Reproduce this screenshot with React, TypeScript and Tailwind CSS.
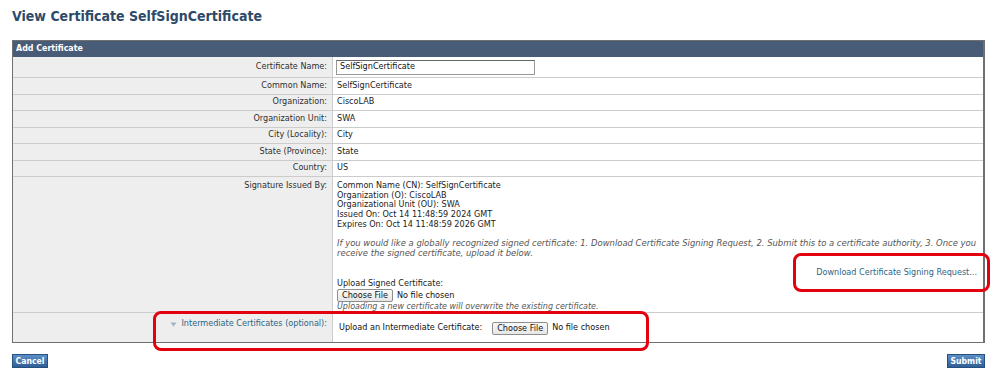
import React from "react";

const rows: [string, string][] = [
  ["Common Name:", "SelfSignCertificate"],
  ["Organization:", "CiscoLAB"],
  ["Organization Unit:", "SWA"],
  ["City (Locality):", "City"],
  ["State (Province):", "State"],
  ["Country:", "US"],
];

function FileBtn() {
  return (
    <span className="inline-flex items-center">
      <span className="inline-flex items-center h-[13px] px-[4px] border border-[#8e8e8e] rounded-[2px] bg-gradient-to-b from-[#fafafa] to-[#e6e6e6] text-[#111] leading-none">
        Choose File
      </span>
      <span className="ml-[4px] text-[#111]">No file chosen</span>
    </span>
  );
}

export default function App() {
  return (
    <div className="relative w-[999px] h-[386px] bg-white overflow-hidden font-['DejaVu_Sans_Condensed','DejaVu_Sans',sans-serif] text-[9px] leading-[9.6px] text-[#2e2e2e]">
      <div className="px-[12px] pt-[8px]">
        <h1 className="text-[14px] leading-[17px] font-bold text-[#2d4a69]">
          View Certificate SelfSignCertificate
        </h1>
        <div className="mt-[15px] w-[973px] border border-[#707070] border-r-2">
          <div className="h-[16px] bg-[#485c78] text-white font-bold flex items-center px-[3px] text-[8.8px]">
            Add Certificate
          </div>
          <div className="grid grid-cols-[320px_1fr]">
            <div className="h-[21px] bg-[#eeeeee] border-b border-r border-[#cccccc] flex items-center justify-end pr-[5px]">
              Certificate Name:
            </div>
            <div className="h-[21px] border-b border-[#cccccc] flex items-center pl-[3px]">
              <div className="w-[199px] h-[15px] border border-[#999] border-t-[#666] bg-white flex items-center pl-[3px] text-[#111]">
                SelfSignCertificate
              </div>
            </div>
            {rows.map(([l, v]) => (
              <React.Fragment key={l}>
                <div className="h-[16.5px] bg-[#eeeeee] border-b border-r border-[#cccccc] flex items-center justify-end pr-[5px]">
                  {l}
                </div>
                <div className="h-[16.5px] border-b border-[#cccccc] flex items-center pl-[4px] text-[#222]">
                  {v}
                </div>
              </React.Fragment>
            ))}
            <div className="h-[136px] bg-[#eeeeee] border-b border-r border-[#cccccc] flex justify-end pr-[5px] pt-[4px]">
              Signature Issued By:
            </div>
            <div className="h-[136px] border-b border-[#cccccc] pl-[4px] pr-[6px] pt-[4px] text-[#222] leading-[9.7px]">
              <div>Common Name (CN): SelfSignCertificate</div>
              <div>Organization (O): CiscoLAB</div>
              <div>Organizational Unit (OU): SWA</div>
              <div>Issued On: Oct 14 11:48:59 2024 GMT</div>
              <div>Expires On: Oct 14 11:48:59 2026 GMT</div>
              <div className="mt-[9.5px] italic text-[#555] whitespace-nowrap font-['DejaVu_Sans',sans-serif] text-[8.45px]">
                If you would like a globally recognized signed certificate: 1. Download Certificate Signing Request, 2. Submit this to a certificate authority, 3. Once you
                <br />
                receive the signed certificate, upload it below.
              </div>
              <div className="mt-[9.5px] text-right text-[#2b6687]">
                Download Certificate Signing Request...
              </div>
              <div className="mt-[1.5px]">Upload Signed Certificate:</div>
              <div className="mt-[0.5px] h-[13px] flex items-center">
                <FileBtn />
              </div>
              <div className="italic text-[#555] font-['DejaVu_Sans',sans-serif] text-[8px]">
                Uploading a new certificate will overwrite the existing certificate.
              </div>
            </div>
            <div className="h-[29px] bg-[#eeeeee] border-r border-[#cccccc] flex justify-end pr-[5px] pt-[6px] text-[#2b6687]">
              <span className="inline-flex items-start">
                <svg width="7" height="7" viewBox="0 0 7 7" className="mr-[4px] mt-[2px]">
                  <path d="M0.5 1.5 L6.5 1.5 L3.5 5.5 Z" fill="#9fb3c4" />
                </svg>
                Intermediate Certificates (optional):
              </span>
            </div>
            <div className="h-[29px] flex items-center pl-[6px] pt-[1px] text-[#111]">
              <span>Upload an Intermediate Certificate:</span>
              <span className="ml-[10px]">
                <FileBtn />
              </span>
            </div>
          </div>
        </div>
        <div className="mt-[11px] flex justify-between w-[973px]">
          <button className="h-[14px] w-[36px] bg-gradient-to-b from-[#5d8fc6] to-[#2f5f95] border border-[#25507f] text-white font-bold leading-none text-[8.6px]">
            Cancel
          </button>
          <button className="h-[14px] w-[38px] bg-gradient-to-b from-[#5d8fc6] to-[#2f5f95] border border-[#25507f] text-white font-bold leading-none text-[8.6px]">
            Submit
          </button>
        </div>
      </div>
      <div className="absolute left-[153px] top-[311px] w-[496px] h-[40px] border-[3px] border-[#e3000f] rounded-[8px] pointer-events-none" />
      <div className="absolute left-[793px] top-[253px] w-[197px] h-[39px] border-[3px] border-[#e3000f] rounded-[8px] pointer-events-none" />
    </div>
  );
}
